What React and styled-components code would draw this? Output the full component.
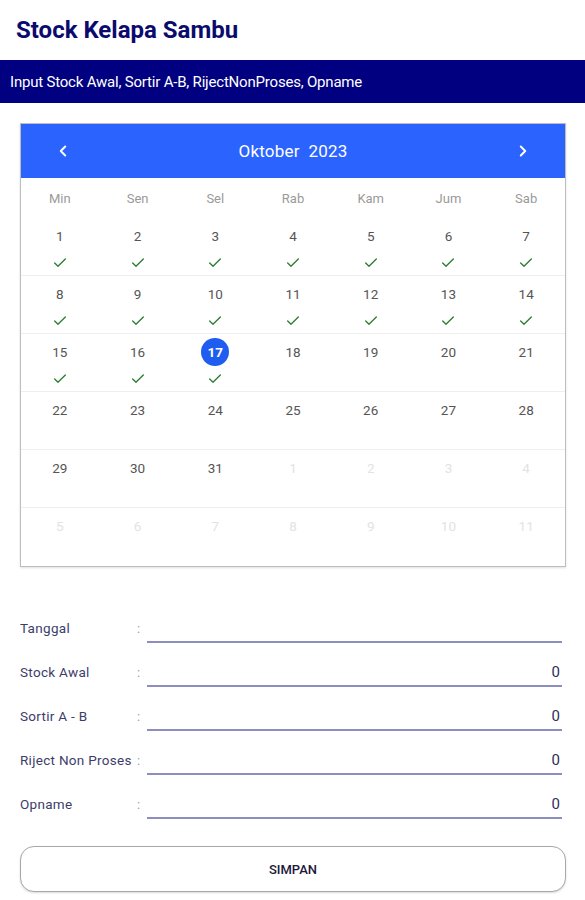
import React from "react";
import styled, { createGlobalStyle } from "styled-components";
import { ChevronLeft, ChevronRight, Check } from "lucide-react";

const GlobalStyle = createGlobalStyle`
  body {
    margin: 0;
    background: #ffffff;
    font-family: Roboto, "Liberation Sans", sans-serif;
  }
`;

const Page = styled.div`
  width: 585px;
  min-height: 900px;
  background: #ffffff;
`;

const Title = styled.h1`
  margin: 0;
  height: 60px;
  box-sizing: border-box;
  padding: 16px 16px 0;
  font-size: 24px;
  font-weight: 700;
  color: #0b0b6e;
  line-height: 28px;
`;

const Banner = styled.div`
  height: 43px;
  display: flex;
  align-items: center;
  padding-left: 10px;
  background: #000080;
  color: #ffffff;
  font-size: 15px;
  letter-spacing: -0.2px;
`;

const Calendar = styled.div`
  margin: 20px 19px 0 20px;
  border: 1px solid #bdbdbd;
  box-shadow: 0 1px 2px rgba(0, 0, 0, 0.12);
`;

const CalHeader = styled.div`
  height: 54px;
  background: #2b63ff;
  color: #ffffff;
  display: grid;
  grid-template-columns: 84px 1fr 84px;
  align-items: center;
  justify-items: center;
  font-size: 17px;
  letter-spacing: 0.2px;
`;

const Grid7 = styled.div`
  display: grid;
  grid-template-columns: repeat(7, 1fr);
  height: ${(p) => p.$h}px;
  border-bottom: ${(p) => (p.$line ? "1px solid #eeeeee" : "none")};
  box-sizing: border-box;
`;

const DayName = styled.div`
  display: flex;
  align-items: center;
  justify-content: center;
  font-size: 13px;
  color: #9a9a9a;
`;

const Cell = styled.div`
  display: flex;
  flex-direction: column;
  align-items: center;
  padding-top: 4px;
`;

const DayNum = styled.div`
  width: 28px;
  height: 28px;
  border-radius: 50%;
  display: flex;
  align-items: center;
  justify-content: center;
  font-size: 13.5px;
  font-weight: ${(p) => (p.$selected ? 700 : 400)};
  background: ${(p) => (p.$selected ? "#1f5cf0" : "transparent")};
  color: ${(p) => (p.$selected ? "#ffffff" : p.$muted ? "#e3e3e3" : "#555555")};
`;

const CheckBox = styled.div`
  height: 16px;
  margin-top: 5px;
  display: flex;
  align-items: center;
`;

const Form = styled.div`
  margin: 32px 23px 0 20px;
`;

const FormRow = styled.div`
  display: grid;
  grid-template-columns: 117px 10px 1fr;
  align-items: end;
  height: 44px;
`;

const Label = styled.div`
  font-size: 13.5px;
  letter-spacing: 0.3px;
  color: #3d3d6b;
  padding-bottom: 7px;
  white-space: nowrap;
`;

const Colon = styled.div`
  font-size: 13px;
  color: #9c9cb0;
  padding-bottom: 7px;
`;

const Field = styled.div`
  height: 26px;
  border-bottom: 2px solid #8d8dc0;
  display: flex;
  align-items: center;
  justify-content: flex-end;
  padding-right: 2px;
  font-size: 15px;
  color: #2e2e5a;
`;

const SaveButton = styled.button`
  display: block;
  width: 546px;
  height: 46px;
  margin: 27px 0 0 20px;
  border: 1px solid #a8a8a8;
  border-radius: 14px;
  background: #ffffff;
  box-shadow: 0 1px 2px rgba(0, 0, 0, 0.15);
  font-family: Roboto, "Liberation Sans", sans-serif;
  font-size: 13px;
  font-weight: 500;
  color: #1a1a3a;
`;

const dayNames = ["Min", "Sen", "Sel", "Rab", "Kam", "Jum", "Sab"];

const weeks = [];
for (let w = 0; w < 6; w++) {
  const row = [];
  for (let d = 0; d < 7; d++) {
    const n = w * 7 + d + 1;
    if (n <= 31) row.push({ n, muted: false, done: n <= 17 });
    else row.push({ n: n - 31, muted: true, done: false });
  }
  weeks.push(row);
}

const fields = [
  { label: "Tanggal", value: "" },
  { label: "Stock Awal", value: "0" },
  { label: "Sortir A - B", value: "0" },
  { label: "Riject Non Proses", value: "0" },
  { label: "Opname", value: "0" },
];

export default function App() {
  return (
    <Page>
      <GlobalStyle />
      <Title>Stock Kelapa Sambu</Title>
      <Banner>Input Stock Awal, Sortir A-B, RijectNonProses, Opname</Banner>
      <Calendar>
        <CalHeader>
          <ChevronLeft size={18} strokeWidth={2.6} />
          <span>Oktober&nbsp; 2023</span>
          <ChevronRight size={18} strokeWidth={2.6} />
        </CalHeader>
        <Grid7 $h={40}>
          {dayNames.map((d) => (
            <DayName key={d}>{d}</DayName>
          ))}
        </Grid7>
        {weeks.map((row, i) => (
          <Grid7 key={i} $h={58} $line={i < 5}>
            {row.map((c) => (
              <Cell key={c.n + (c.muted ? "m" : "")}>
                <DayNum $muted={c.muted} $selected={!c.muted && c.n === 17}>
                  {c.n}
                </DayNum>
                <CheckBox>
                  {c.done && <Check size={16} strokeWidth={2} color="#2e7d32" />}
                </CheckBox>
              </Cell>
            ))}
          </Grid7>
        ))}
      </Calendar>
      <Form>
        {fields.map((f) => (
          <FormRow key={f.label}>
            <Label>{f.label}</Label>
            <Colon>:</Colon>
            <Field>{f.value}</Field>
          </FormRow>
        ))}
      </Form>
      <SaveButton>SIMPAN</SaveButton>
    </Page>
  );
}
